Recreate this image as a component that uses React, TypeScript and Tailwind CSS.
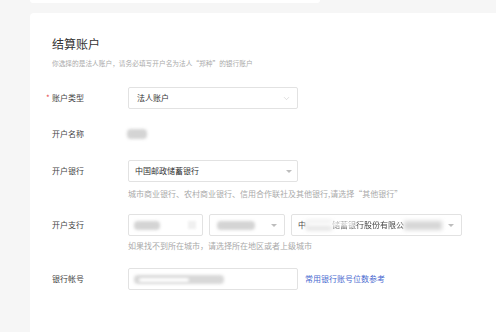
import { ChevronDown } from "lucide-react";

const font = { fontFamily: '"Noto Sans CJK SC", "Noto Sans", sans-serif' };

function Caret() {
  return (
    <span className="h-0 w-0 border-x-[3px] border-t-[3px] border-x-transparent border-t-[#bdbdbd]" />
  );
}

function Blob({ className }: { className: string }) {
  return <span className={`block rounded-sm bg-[#d4d4d4] blur-[1.5px] ${className}`} />;
}

function Row({
  label,
  required,
  children,
  className = "",
}: {
  label: string;
  required?: boolean;
  children: React.ReactNode;
  className?: string;
}) {
  return (
    <div className={`flex items-center ${className}`}>
      <div className="relative w-[76px] shrink-0 text-[8px] leading-[12px] text-[#444]">
        {required && (
          <span className="absolute -left-[6px] top-0 text-[#e84a4a]">*</span>
        )}
        {label}
      </div>
      {children}
    </div>
  );
}

export default function App() {
  return (
    <div className="min-h-[332px] w-[496px] overflow-hidden bg-[#f6f6f6]" style={font}>
      <div className="ml-[30px] h-[3px] w-[290px] rounded-b bg-white" />
      <div className="ml-[30px] mt-[10px] h-[330px] rounded-tl bg-white pl-[22px] pt-[23px]">
        <h1 className="text-[12px] leading-[16px] text-[#333]">结算账户</h1>
        <p className="mt-[6px] text-[6.7px] leading-[10px] text-[#aaa]">
          你选择的是法人账户，请务必填写开户名为法人“郑种”的银行账户
        </p>

        <Row label="账户类型" required className="mt-[19px]">
          <div className="flex h-[22px] w-[170px] items-center justify-between rounded-[2px] border border-[#e2e2e2] pl-[8px] pr-[6px] text-[8px] text-[#333]">
            法人账户
            <ChevronDown className="h-[9px] w-[9px] text-[#c8c8c8]" strokeWidth={1.5} />
          </div>
        </Row>

        <Row label="开户名称" className="mt-[14px] h-[22px]">
          <Blob className="h-[10px] w-[20px] -translate-x-px" />
        </Row>

        <Row label="开户银行" className="mt-[15px]">
          <div className="flex h-[22px] w-[170px] items-center justify-between rounded-[2px] border border-[#e2e2e2] pl-[6px] pr-[5px] text-[8px] text-[#333]">
            中国邮政储蓄银行
            <Caret />
          </div>
        </Row>
        <p className="ml-[76px] mt-[6px] text-[8px] leading-[12px] text-[#aaa]">
          城市商业银行、农村商业银行、信用合作联社及其他银行,请选择“其他银行”
        </p>

        <Row label="开户支行" className="mt-[14px]">
          <div className="flex gap-[6px]">
            <div className="flex h-[22px] w-[75px] items-center gap-[28px] rounded-[2px] border border-[#e2e2e2] pl-[5px]">
              <Blob className="h-[9px] w-[26px]" />
              <span className="block h-[8px] w-[8px] bg-[#f0f0f0] blur-[1px]" />
            </div>
            <div className="flex h-[22px] w-[76px] items-center justify-between rounded-[2px] border border-[#e2e2e2] pl-[7px] pr-[7px]">
              <Blob className="h-[9px] w-[38px]" />
              <Caret />
            </div>
            <div className="flex h-[22px] w-[171px] items-center justify-between rounded-[2px] border border-[#e2e2e2] pl-[6px] pr-[7px] text-[8px] text-[#444]">
              <div className="relative flex items-center whitespace-nowrap">
                <span>中</span>
                <span className="block h-[9px] w-[26px] bg-[#dcdcdc] blur-[2px]" />
                <span className="blur-[0.4px]">储蓄银行股份有限公</span>
                <span className="block h-[9px] w-[38px] bg-[#d6d6d6] blur-[2px]" />
                <span className="absolute left-[8px] top-[2px] h-[6px] w-[50px] rounded-full bg-white/90 blur-[2px]" />
              </div>
              <Caret />
            </div>
          </div>
        </Row>
        <p className="ml-[76px] mt-[4px] text-[8px] leading-[12px] text-[#aaa]">
          如果找不到所在城市，请选择所在地区或者上级城市
        </p>

        <Row label="银行帐号" className="mt-[16px]">
          <div className="relative flex h-[22px] w-[170px] items-center rounded-[2px] border border-[#e2e2e2] pl-[5px]">
            <Blob className="h-[9px] w-[90px] bg-[#d8d8d8]" />
            <span className="absolute left-[10px] top-[9px] h-[4px] w-[50px] rounded-full bg-white blur-[1.5px]" />
          </div>
          <span className="ml-[7px] text-[8px] text-[#4a6ad0]">常用银行账号位数参考</span>
        </Row>
      </div>
    </div>
  );
}
